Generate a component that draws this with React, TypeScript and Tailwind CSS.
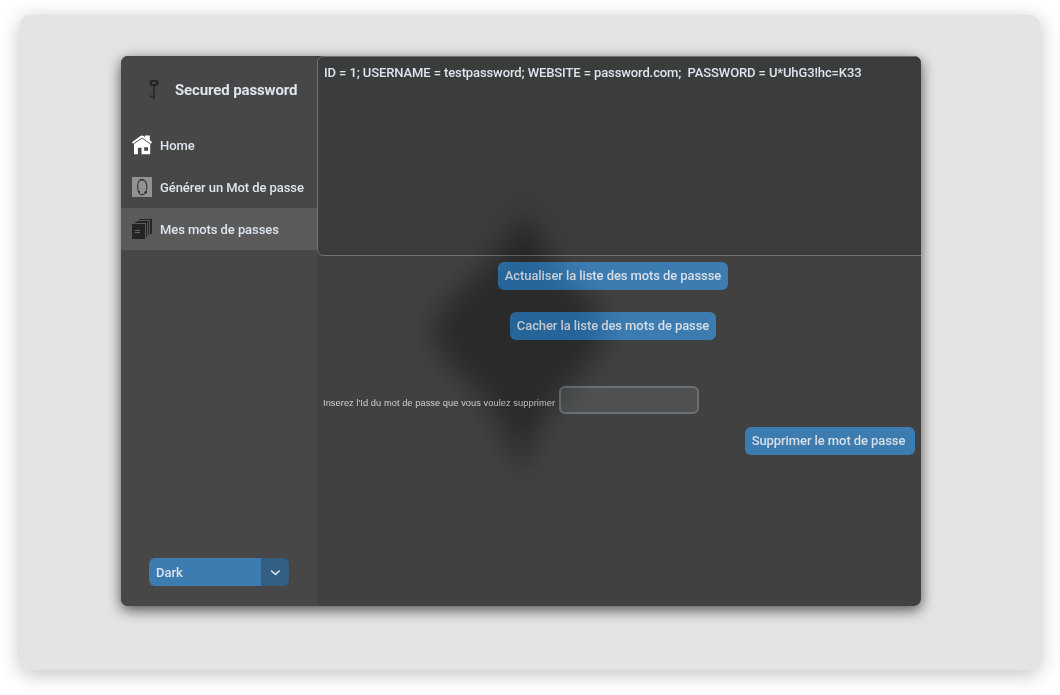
import type { ReactNode } from "react";

function KeyIcon() {
  return (
    <svg width="10" height="22" viewBox="0 0 10 22" className="shrink-0">
      <ellipse cx="5" cy="4" rx="3.5" ry="2.3" fill="none" stroke="#242424" strokeWidth="2" />
      <path d="M5 6V21M1.5 17.5H5M2 16.4V18.6" fill="none" stroke="#2b2b2b" strokeWidth="1.8" />
    </svg>
  );
}

function HomeIcon() {
  return (
    <svg width="20" height="20" viewBox="0 0 20 20" className="shrink-0">
      <path d="M0 7.2 8.4 1.1Q10 0 11.6 1.1L13 2V.6H17.8V5.2L20 7 19 8.8 11 3.2Q10 2.5 9 3.2L1 8.8Z" fill="#fff" />
      <path
        fillRule="evenodd"
        d="M2 9 10 3.6 18.2 9V19.3H9.5V12.7H5.9V19.3H2ZM12.2 12.2V15.8H16V12.2Z"
        fill="#fff"
      />
    </svg>
  );
}

function GenerateIcon() {
  return (
    <svg width="20" height="20" viewBox="0 0 20 20" className="shrink-0">
      <rect width="20" height="20" fill="#929292" />
      <g fill="none" stroke="#343434" strokeWidth="1.1">
        <path d="M8.2 3C5.5 4.5 5 10 6.4 14.4" />
        <path d="M8 17.2C10.8 18.3 12.5 17.2 13.4 15.5" />
        <path d="M10 2.5C14.5 3.3 15.7 8.3 14.3 13.2" />
      </g>
      <path d="M8 2H11.2V4L9.5 3.2 8 3.8ZM5.6 14H7.9V17.4L6.3 15.8ZM12.5 14.4 14.9 13.4V16.2L12.8 16.6Z" fill="#2b2b2b" />
    </svg>
  );
}

function StackIcon() {
  return (
    <svg width="20" height="20" viewBox="0 0 20 20" shapeRendering="crispEdges" className="shrink-0">
      <path d="M0 5H13V20H0ZM3 3H15V18H14V4H3ZM5 2H17V16H16V3H5ZM7 0H20V15H18V1H7Z" fill="#242424" />
      <path d="M3 11H8V12H3ZM3 13H8V14H3Z" fill="#6a6a6a" />
    </svg>
  );
}

function NavItem({ icon, label, active = false }: { icon: ReactNode; label: string; active?: boolean }) {
  return (
    <button
      className={`flex h-[42px] w-full items-center gap-2 pl-[11px] text-left text-[13px] font-medium tracking-[-0.07px] whitespace-nowrap ${
        active ? "bg-[#5a5a5a]" : ""
      }`}
    >
      {icon}
      <span className="pt-0.5">{label}</span>
    </button>
  );
}

function ActionButton({ children, className }: { children: ReactNode; className: string }) {
  return (
    <button
      className={`h-7 rounded-[6px] bg-[#3d7cb0] text-[13px] font-medium tracking-[-0.08px] whitespace-nowrap text-[#d8dfe7] ${className}`}
    >
      {children}
    </button>
  );
}

function Shade() {
  return (
    <svg
      width="280"
      height="360"
      viewBox="0 0 280 360"
      className="pointer-events-none absolute top-[110px] left-[260px] mix-blend-difference"
    >
      <defs>
        <filter id="soft" x="-30%" y="-30%" width="160%" height="160%" colorInterpolationFilters="sRGB">
          <feGaussianBlur stdDeviation="14" />
        </filter>
      </defs>
      <path
        d="M143 40 Q156 80 187 112 Q218 138 228 165 Q216 192 187 220 Q158 252 140 310 Q122 252 91 220 Q60 192 48 165 Q60 138 94 110 Q130 80 143 40Z"
        fill="#171717"
        filter="url(#soft)"
      />
    </svg>
  );
}

export default function App() {
  return (
    <div className="h-[695px] w-[1060px] overflow-hidden bg-white px-5 pt-[15px] font-['Roboto',sans-serif] text-[#dce4ee]">
      <div className="h-[655px] rounded-[10px] bg-[#e4e4e4] pt-[41px] pl-[101px] shadow-[0_4px_20px_rgba(0,0,0,0.25)]">
        <div className="h-[550px] w-[800px] rounded-[7px] shadow-[0_4px_14px_rgba(0,0,0,0.65)]">
          <div className="relative flex h-full overflow-hidden rounded-[7px] bg-[#414141]">
            <aside className="flex w-[196px] shrink-0 flex-col bg-[#474747]">
              <div className="flex h-[68px] items-center gap-4 pl-7">
                <KeyIcon />
                <h1 className="text-[15px] font-bold tracking-[-0.12px] whitespace-nowrap">Secured password</h1>
              </div>
              <nav className="flex flex-col">
                <NavItem icon={<HomeIcon />} label="Home" />
                <NavItem icon={<GenerateIcon />} label="Générer un Mot de passe" />
                <NavItem icon={<StackIcon />} label="Mes mots de passes" active />
              </nav>
              <button className="mt-auto mb-5 ml-7 flex h-7 w-[140px] overflow-hidden rounded-[6px] text-[13px] font-medium">
                <span className="flex h-full w-28 items-center bg-[#3d7cb0] pt-0.5 pl-[7px]">Dark</span>
                <span className="flex h-full w-7 items-center justify-center bg-[#325f82] pt-0.5">
                  <svg width="10" height="6" viewBox="0 0 10 6" fill="none">
                    <path d="M1.5 1 5.5 4.4 9.2 1" stroke="#dce4ee" strokeWidth="1.6" strokeLinecap="round" strokeLinejoin="round" />
                  </svg>
                </span>
              </button>
            </aside>
            <main className="flex min-w-0 flex-1 flex-col">
              <div className="h-[200px] w-[620px] shrink-0 rounded-[6px] border border-[#707373] bg-[#3b3d3c] px-1.5 pt-[7px] text-[13px] leading-[18px] font-medium tracking-[-0.108px] whitespace-pre">
                {"ID = 1; USERNAME = testpassword; WEBSITE = password.com;  PASSWORD = U*UhG3!hc=K33"}
              </div>
              <div className="flex flex-col items-center pt-1.5 pr-3">
                <ActionButton className="w-[230px]">Actualiser la liste des mots de passse</ActionButton>
                <ActionButton className="mt-[22px] w-[206px]">Cacher la liste des mots de passe</ActionButton>
              </div>
              <div className="mt-[46px] flex h-7 items-center pl-1.5">
                <label
                  htmlFor="entry-id"
                  className="w-[236px] pt-[7px] font-['Liberation_Sans',sans-serif] text-[9.3px] tracking-[0.045px] whitespace-nowrap text-[#d0d0d0]"
                >
                  Inserez l'Id du mot de passe que vous voulez supprimer
                </label>
                <input id="entry-id" className="h-7 w-[140px] rounded-[6px] border-2 border-[#6b7073] bg-[#4f5052]" />
              </div>
              <ActionButton className="mt-[13px] mr-1.5 w-[170px] self-end pr-[3px]">Supprimer le mot de passe</ActionButton>
            </main>
            <Shade />
          </div>
        </div>
      </div>
    </div>
  );
}
